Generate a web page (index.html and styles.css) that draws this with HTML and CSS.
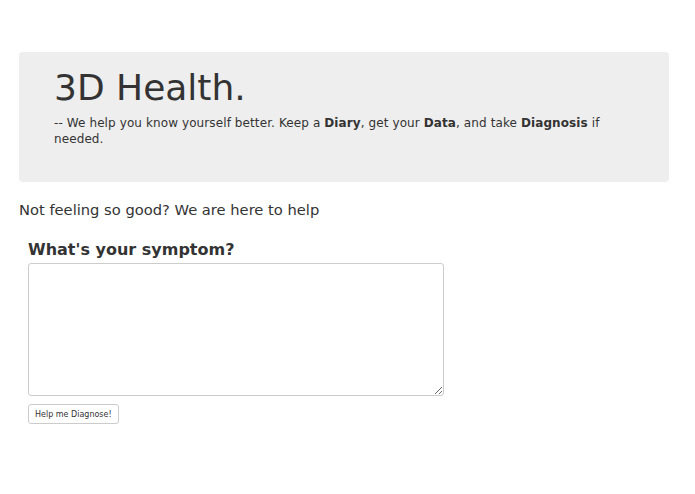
FILE: index.html
```html
<!DOCTYPE html>
<html>
<head><title>3D Health</title>
<link rel="stylesheet" href="styles.css">
</head>
<body>
<div class="jumbotron">
  <h1>3D Health.</h1>
  <p>-- We help you know yourself better. Keep a <b>Diary</b>, get your <b>Data</b>, and take <b>Diagnosis</b> if needed.</p>
</div>

<p class="lead">Not feeling so good? We are here to help</p>

<div class="symptom-form">
  <label for="symptom">What's your symptom?</label>
  <textarea name="symptom" id="symptom"></textarea>
  <button>Help me Diagnose!</button>
</div>
</body>
</html>
```

FILE: styles.css
```css
body {
  font-family: "DejaVu Sans", Verdana, sans-serif;
  color: #333;
  margin: 0;
  padding: 52px 26px 0 19px;
}

.jumbotron {
  background-color: #eee;
  border-radius: 4px;
  padding: 13px 50px 35px 35px;
  height: 82px;
}

.jumbotron h1 {
  font-size: 36px;
  font-weight: normal;
  margin: 0 0 4px 0;
  line-height: 46px;
}

.jumbotron p {
  font-size: 12px;
  line-height: 16px;
  letter-spacing: 0.1px;
  margin: 0;
}

.lead {
  font-size: 14.7px;
  line-height: 18px;
  margin: 19px 0 0 0;
}

.symptom-form {
  padding: 21px 9px 0 9px;
}

.symptom-form label {
  display: block;
  font-size: 16px;
  line-height: 20px;
  font-weight: bold;
  margin-bottom: 3px;
}

.symptom-form textarea {
  display: block;
  width: 416px;
  height: 133px;
  box-sizing: border-box;
  border: 1px solid #ccc;
  border-radius: 3px;
  margin-bottom: 8px;
}

.symptom-form button {
  display: block;
  font-family: "DejaVu Sans", Verdana, sans-serif;
  font-size: 8px;
  color: #333;
  background-color: #fff;
  border: 1px solid #ccc;
  border-radius: 3px;
  padding: 3px 6px;
  height: 20px;
}
```
